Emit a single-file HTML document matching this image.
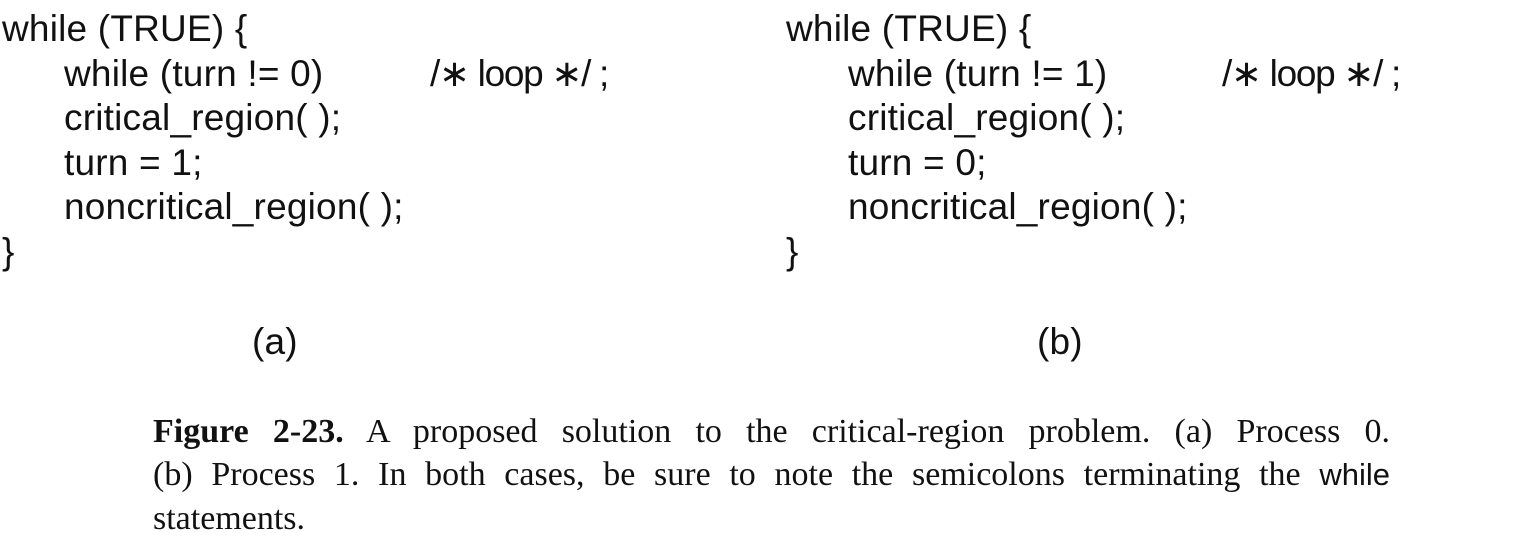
<!DOCTYPE html>
<html><head><style>
body{margin:0;width:1540px;height:546px;background:#fff;position:relative;overflow:hidden;color:#111;}
.c{position:absolute;font-family:"Liberation Sans",sans-serif;font-size:37px;line-height:36px;white-space:pre;letter-spacing:0.2px;}
.cm{letter-spacing:-1.3px;}
.cap{position:absolute;left:153px;width:1237px;font-family:"Liberation Serif",serif;font-size:34px;line-height:33px;text-align:justify;text-align-last:justify;}
.s{font-family:"Liberation Sans",sans-serif;font-size:31px;}
</style></head><body>
<div class="c" style="left:2px;top:11px">while (TRUE) {</div>
<div class="c" style="left:64px;top:56px">while (turn != 0)</div>
<div class="c cm" style="left:430px;top:56px">/∗ loop ∗/ ;</div>
<div class="c" style="left:64px;top:100px">critical_region( );</div>
<div class="c" style="left:64px;top:145px">turn = 1;</div>
<div class="c" style="left:64px;top:189px">noncritical_region( );</div>
<div class="c" style="left:2px;top:234px">}</div>
<div class="c" style="left:252px;top:324px">(a)</div>

<div class="c" style="left:786px;top:11px">while (TRUE) {</div>
<div class="c" style="left:848px;top:56px">while (turn != 1)</div>
<div class="c cm" style="left:1222px;top:56px">/∗ loop ∗/ ;</div>
<div class="c" style="left:848px;top:100px">critical_region( );</div>
<div class="c" style="left:848px;top:145px">turn = 0;</div>
<div class="c" style="left:848px;top:189px">noncritical_region( );</div>
<div class="c" style="left:786px;top:234px">}</div>
<div class="c" style="left:1037px;top:324px">(b)</div>

<div class="cap" style="top:415px"><b>Figure 2-23.</b> A proposed solution to the critical-region problem. (a) Process 0.</div>
<div class="cap" style="top:458px">(b) Process 1. In both cases, be sure to note the semicolons terminating the <span class="s">while</span></div>
<div class="cap" style="top:502px;text-align-last:left">statements.</div>
</body></html>
